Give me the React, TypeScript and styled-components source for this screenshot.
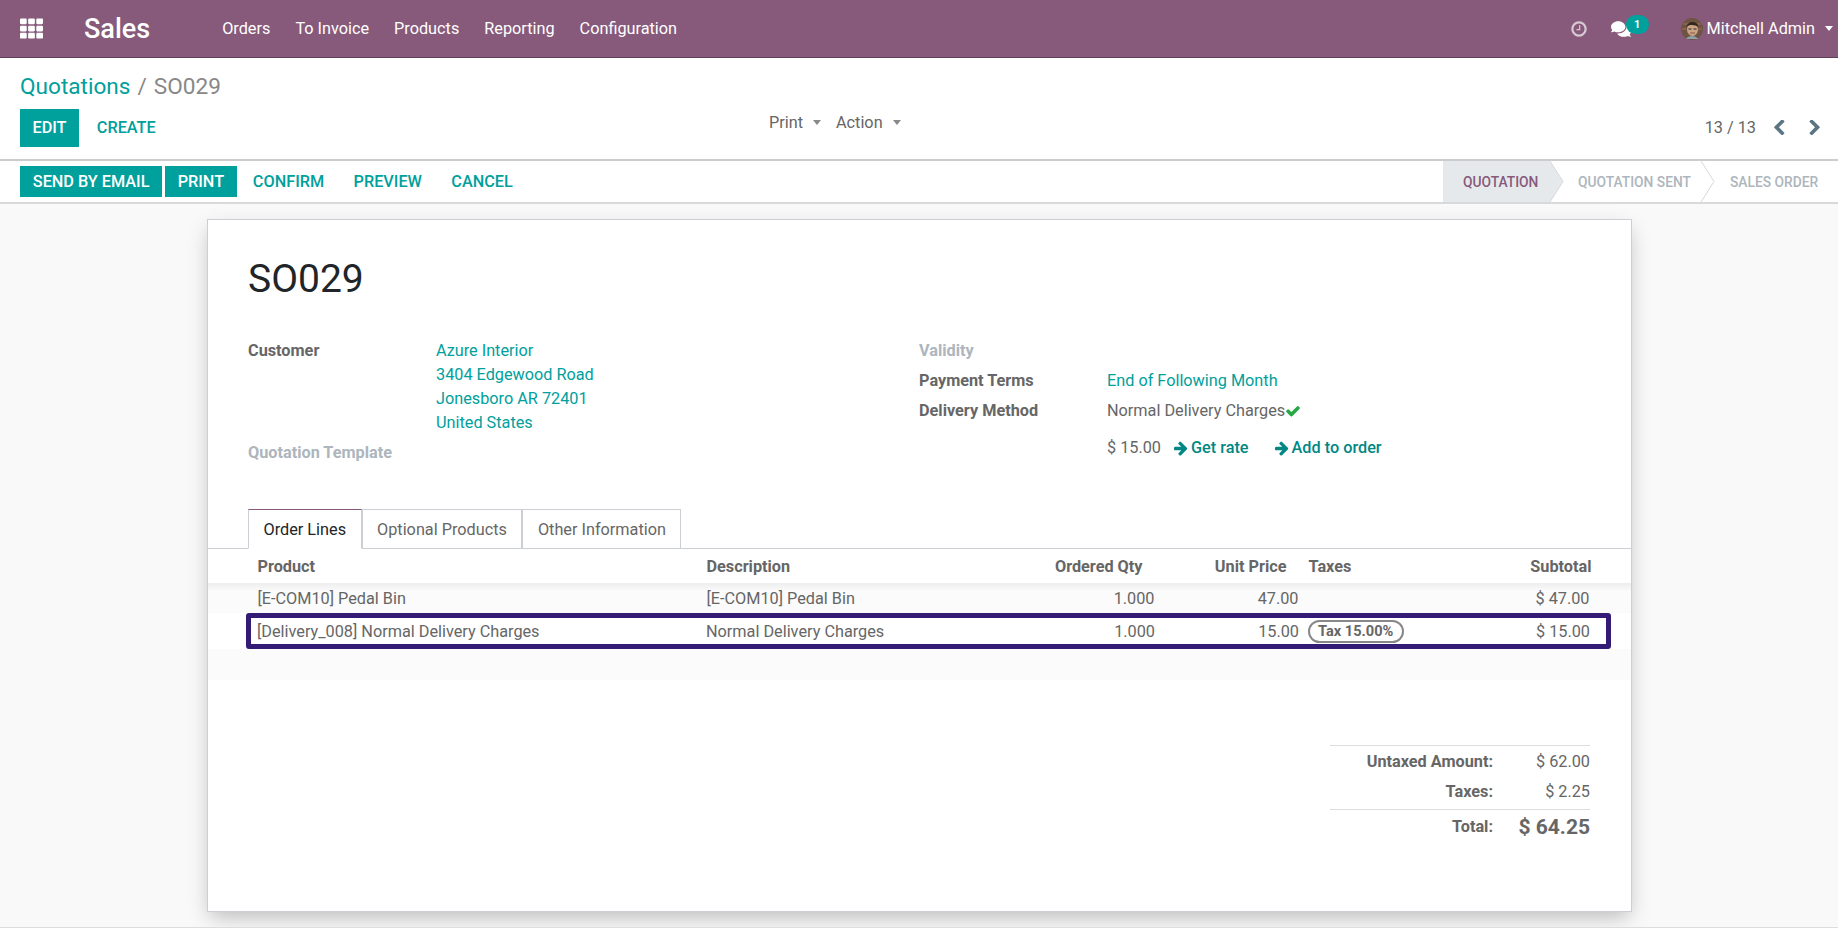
import React from "react";
import styled, { createGlobalStyle } from "styled-components";
import { FaComments, FaTh } from "react-icons/fa";

const GlobalStyle = createGlobalStyle`
  html, body {
    margin: 0;
    height: 100%;
    background: #fff;
  }
  body {
    font-family: Roboto, "Liberation Sans", sans-serif;
    font-size: 16.25px;
    color: #666;
    overflow: hidden;
  }
  * {
    box-sizing: border-box;
  }
`;

const Page = styled.div`
  width: 1838px;
  height: 949px;
  display: flex;
  flex-direction: column;
`;

const Navbar = styled.header`
  height: 58px;
  flex: none;
  display: flex;
  align-items: center;
  padding: 0 5px 0 20px;
  background: #875a7b;
  border-bottom: 1px solid #5f4058;
  color: #fff;
`;

const AppsIcon = styled(FaTh)`
  width: 23px;
  height: 23px;
  margin-right: 41px;
`;

const Brand = styled.span`
  font-size: 27px;
  font-weight: 500;
  margin-right: 72px;
`;

const Menu = styled.nav`
  display: flex;
  gap: 25px;
`;

const MenuItem = styled.span`
  color: #fff;
`;

const Systray = styled.div`
  margin-left: auto;
  display: flex;
  align-items: center;
`;

const ClockIcon = styled.svg`
  width: 18px;
  height: 18px;
  fill: #d6c9d3;
  margin-right: 23px;
`;

const ChatWrap = styled.div`
  width: 19px;
  height: 20px;
  position: relative;
  margin-right: 51px;
`;

const ChatIcon = styled(FaComments)`
  width: 20px;
  height: 18px;
  margin-top: 1px;
`;

const Badge = styled.span`
  position: absolute;
  left: 15px;
  top: -3.5px;
  width: 23px;
  height: 19px;
  border-radius: 10px;
  background: #00a09d;
  color: #fff;
  font-size: 11px;
  font-weight: 700;
  display: flex;
  align-items: center;
  justify-content: center;
`;

const Avatar = styled.svg`
  width: 22px;
  height: 22px;
  margin-right: 4px;
`;

const UserName = styled.span`
  margin-right: 10px;
`;

const Caret = styled.span<{ $color?: string }>`
  display: inline-block;
  width: 0;
  height: 0;
  border-left: 4px solid transparent;
  border-right: 4px solid transparent;
  border-top: 5px solid ${(p) => p.$color ?? "#fff"};
`;

const ControlPanel = styled.section`
  flex: none;
  height: 103px;
  background: #fff;
  border-bottom: 2px solid #ccc;
  padding: 16px 17px 0 20px;
`;

const Breadcrumb = styled.div`
  font-size: 22.6px;
  line-height: 26px;
  color: #888;
  margin-bottom: 9px;
`;

const Crumb = styled.a`
  color: #00a09d;
`;

const CrumbSep = styled.span`
  margin: 0 7px;
`;

const PanelRow = styled.div`
  display: grid;
  grid-template-columns: 749px 1fr auto;
  align-items: start;
`;

const Group = styled.div`
  display: flex;
  align-items: center;
`;

const Button = styled.button<{ $primary?: boolean }>`
  border: 0;
  border-radius: 0;
  background: ${(p) => (p.$primary ? "#00a09d" : "transparent")};
  color: ${(p) => (p.$primary ? "#fff" : "#00a09d")};
  font: 500 16.25px Roboto, sans-serif;
  text-transform: uppercase;
  padding: 0 12.8px;
  white-space: nowrap;
`;

const EditButton = styled(Button)`
  height: 38px;
  width: 59px;
  padding: 0 0 2px;
`;

const CreateButton = styled(Button)`
  height: 38px;
  margin-left: 5px;
  padding-bottom: 2px;
`;

const MiddleGroup = styled(Group)`
  padding-top: 1px;
`;

const DropToggle = styled.span`
  display: inline-flex;
  align-items: center;
  gap: 10px;
  margin-right: 15px;
  height: 24px;
  color: #666;
`;

const Pager = styled.div`
  display: flex;
  align-items: center;
  height: 36px;
  color: #666;
`;

const PagerText = styled.span`
  margin-right: 16px;
`;

const PagerArrow = styled.svg`
  width: 13px;
  height: 15px;
  fill: #5b7682;
  & + & {
    margin-left: 23px;
  }
`;

const StatusRow = styled.section`
  flex: none;
  height: 43px;
  display: flex;
  align-items: stretch;
  justify-content: space-between;
  background: #fff;
  border-bottom: 2px solid #d9d9d9;
  padding-left: 20px;
`;

const StatusButtons = styled.div`
  display: flex;
  align-items: center;
  gap: 2.6px;
`;

const StatusAction = styled(Button)`
  height: 31px;
  padding: 0 ${(p) => (p.$primary ? 12.8 : 13.4)}px;
`;

const Statusbar = styled.div`
  display: flex;
  align-items: stretch;
`;

const Stage = styled.div<{ $current?: boolean; $width: number; $pad: number }>`
  position: relative;
  width: ${(p) => p.$width}px;
  padding-left: ${(p) => p.$pad}px;
  display: flex;
  align-items: center;
  background: ${(p) => (p.$current ? "#e6e9ec" : "#fff")};
  color: ${(p) => (p.$current ? "#875a7b" : "#adb5bd")};
  font-size: 13.8px;
  font-weight: 500;
  text-transform: uppercase;
`;

const StageArrow = styled.svg`
  position: absolute;
  top: 0;
  left: 100%;
  width: 14px;
  height: 41px;
  z-index: 1;
`;

const Canvas = styled.main`
  flex: 1;
  min-height: 0;
  background: #f9f9f9;
  padding: 15px 206px 0 207px;
`;

const Sheet = styled.article`
  height: 693px;
  background: #fff;
  border: 1px solid #ccd0d5;
  box-shadow: 0 8px 20px -3px rgba(0, 0, 0, 0.25);
  padding-top: 37px;
  display: flex;
  flex-direction: column;
`;

const Title = styled.h1`
  margin: 0 0 0 40px;
  font-size: 39px;
  line-height: 44px;
  font-weight: 400;
  color: #212529;
`;

const FormGrid = styled.div`
  display: grid;
  grid-template-columns: 671px 1fr;
  padding-left: 40px;
  margin-top: 38px;
  height: 170px;
`;

const FieldColumn = styled.div`
  display: flex;
  flex-direction: column;
`;

const Field = styled.div`
  display: grid;
  grid-template-columns: 188px 1fr;
  line-height: 24px;
  margin-bottom: 6px;
`;

const Label = styled.label<{ $muted?: boolean }>`
  font-weight: 700;
  color: ${(p) => (p.$muted ? "#adb5bd" : "#666")};
`;

const LinkValue = styled.a`
  color: #00a09d;
`;

const Value = styled.span`
  color: #666;
  display: flex;
  align-items: center;
`;

const CheckIcon = styled.svg`
  width: 16px;
  height: 16px;
  fill: #28a745;
`;

const RateRow = styled.div`
  display: flex;
  align-items: center;
  line-height: 24px;
  margin: 7px 0 0 188px;
`;

const RateAction = styled.a`
  display: inline-flex;
  align-items: center;
  gap: 1px;
  color: #008784;
  font-weight: 500;
  margin-left: 13px;
  & + & {
    margin-left: 26px;
  }
`;

const ArrowIcon = styled.svg`
  width: 16px;
  height: 16px;
  fill: #008784;
`;

const Tabs = styled.div`
  display: flex;
  height: 40px;
  padding-left: 40px;
  border-bottom: 1px solid #ccd0d5;
`;

const Tab = styled.div<{ $active?: boolean }>`
  height: 40px;
  padding: 0 14.5px;
  display: flex;
  align-items: center;
  background: #fff;
  color: ${(p) => (p.$active ? "#212529" : "#666")};
  border: 1px solid #ccd0d5;
  border-top: 1px solid ${(p) => (p.$active ? "#875a7b" : "#ccd0d5")};
  border-bottom: 1px solid ${(p) => (p.$active ? "#fff" : "#ccd0d5")};
`;

const colTemplate = "449px 272px 176px 144px 190px 101px";
const boxedTemplate = "449px 273px 176px 144px 190px 101px";

const HeadRow = styled.div`
  display: grid;
  grid-template-columns: ${colTemplate};
  height: 34px;
  align-items: center;
  padding-left: 49.5px;
  font-weight: 700;
`;

const LineRow = styled.div`
  display: grid;
  grid-template-columns: ${colTemplate};
  align-items: center;
  height: 30px;
  padding-left: 49.5px;
  background: linear-gradient(#ededed, #fbfbfb 8px, #fbfbfb);
`;

const BoxedRow = styled.div`
  margin: 0 20px 0 38px;
  height: 36px;
  border: 5.5px solid #341c76;
  border-radius: 3px;
  background: #fff;
  display: grid;
  grid-template-columns: ${boxedTemplate};
  align-items: center;
  padding-left: 6px;
`;

const Spacer = styled.div`
  height: 31px;
  background: #fbfbfb;
`;

const Cell = styled.div<{ $right?: boolean }>`
  text-align: ${(p) => (p.$right ? "right" : "left")};
  white-space: nowrap;
`;

const HeadCell = styled(Cell)<{ $shift?: number }>`
  margin-right: ${(p) => p.$shift ?? 0}px;
`;

const TaxCell = styled(Cell)`
  padding-left: 10px;
`;

const TaxPill = styled.span`
  display: inline-block;
  height: 23px;
  line-height: 19px;
  margin-left: -1px;
  border: 2px solid #888;
  border-radius: 12px;
  padding: 0 8.5px 0 8px;
  font-size: 14.6px;
  font-weight: 700;
`;

const Totals = styled.div`
  align-self: flex-end;
  width: 260px;
  margin: 65px 41px 0 0;
  border-top: 1px solid #ddd;
`;

const TotalRow = styled.div<{ $grand?: boolean }>`
  display: grid;
  grid-template-columns: 163px 1fr;
  align-items: center;
  height: ${(p) => (p.$grand ? 34 : 30)}px;
  margin-top: ${(p) => (p.$grand ? 3 : 0)}px;
  border-top: ${(p) => (p.$grand ? "1px solid #ddd" : "0")};
  text-align: right;
`;

const TotalLabel = styled.span`
  font-weight: 700;
`;

const GrandValue = styled.span`
  font-size: 21px;
  font-weight: 700;
`;

const FooterLine = styled.div`
  flex: none;
  height: 22px;
  background: #fff;
  border-top: 1px solid #ddd;
`;

const menuItems = ["Orders", "To Invoice", "Products", "Reporting", "Configuration"];
const address = ["Azure Interior", "3404 Edgewood Road", "Jonesboro AR 72401", "United States"];

const arrowPath =
  "M1472 960q0 54-37 91l-651 651q-39 37-91 37-51 0-90-37l-75-75q-38-38-38-91t38-91l293-293h-704q-52 0-84.5-37.5t-32.5-90.5v-128q0-53 32.5-90.5t84.5-37.5h704l-293-294q-38-36-38-90t38-90l75-75q38-38 90-38 53 0 91 38l651 651q37 35 37 90z";

export default function App() {
  return (
    <Page>
      <GlobalStyle />
      <Navbar>
        <AppsIcon />
        <Brand>Sales</Brand>
        <Menu>
          {menuItems.map((m) => (
            <MenuItem key={m}>{m}</MenuItem>
          ))}
        </Menu>
        <Systray>
          <ClockIcon viewBox="0 0 1792 1792">
            <path d="M1024 544v448q0 14-9 23t-23 9h-320q-14 0-23-9t-9-23v-64q0-14 9-23t23-9h224v-352q0-14 9-23t23-9h64q14 0 23 9t9 23zm416 352q0-148-73-273t-198-198-273-73-273 73-198 198-73 273 73 273 198 198 273 73 273-73 198-198 73-273zm224 0q0 209-103 385.5t-279.5 279.5-385.5 103-385.5-103-279.5-279.5-103-385.5 103-385.5 279.5-279.5 385.5-103 385.5 103 279.5 279.5 103 385.5z" />
          </ClockIcon>
          <ChatWrap>
            <ChatIcon />
            <Badge>1</Badge>
          </ChatWrap>
          <Avatar viewBox="0 0 22 22">
            <circle cx="11" cy="11" r="11" fill="#6f5443" />
            <path d="M2 6h18M1 11h4M17 11h4" stroke="#8d6a52" strokeWidth="1.5" />
            <ellipse cx="11.5" cy="11.5" rx="5.5" ry="6.5" fill="#c9a488" />
            <path d="M5.5 9c1-6 11-7 12 0-3-2-9-3-12 0z" fill="#33261f" />
            <path d="M5 21c2-4 10-4 12 0z" fill="#8ea0a8" />
            <path d="M7.5 11h3M12.5 11h3" stroke="#33261f" strokeWidth="1.2" />
            <path d="M9 15h5" stroke="#8a5a48" strokeWidth="1" />
          </Avatar>
          <UserName>Mitchell Admin</UserName>
          <Caret />
        </Systray>
      </Navbar>

      <ControlPanel>
        <Breadcrumb>
          <Crumb>Quotations</Crumb>
          <CrumbSep>/</CrumbSep>SO029
        </Breadcrumb>
        <PanelRow>
          <Group>
            <EditButton $primary>Edit</EditButton>
            <CreateButton>Create</CreateButton>
          </Group>
          <MiddleGroup>
            <DropToggle>
              Print <Caret $color="#888" />
            </DropToggle>
            <DropToggle>
              Action <Caret $color="#888" />
            </DropToggle>
          </MiddleGroup>
          <Pager>
            <PagerText>13 / 13</PagerText>
            <PagerArrow viewBox="200 100 1300 1500">
              <path d="M1427 301l-531 531 531 531q19 19 19 45t-19 45l-166 166q-19 19-45 19t-45-19l-742-742q-19-19-19-45t19-45l742-742q19-19 45-19t45 19l166 166q19 19 19 45t-19 45z" />
            </PagerArrow>
            <PagerArrow viewBox="200 100 1300 1500">
              <path d="M1363 877l-742 742q-19 19-45 19t-45-19l-166-166q-19-19-19-45t19-45l531-531-531-531q-19-19-19-45t19-45l166-166q19-19 45-19t45 19l742 742q19 19 19 45t-19 45z" />
            </PagerArrow>
          </Pager>
        </PanelRow>
      </ControlPanel>

      <StatusRow>
        <StatusButtons>
          <StatusAction $primary>Send by email</StatusAction>
          <StatusAction $primary>Print</StatusAction>
          <StatusAction>Confirm</StatusAction>
          <StatusAction>Preview</StatusAction>
          <StatusAction>Cancel</StatusAction>
        </StatusButtons>
        <Statusbar>
          <Stage $current $width={107} $pad={20}>
            Quotation
            <StageArrow viewBox="0 0 14 41" preserveAspectRatio="none">
              <path d="M0 0 L13 20.5 L0 41 Z" fill="#e6e9ec" />
              <path d="M0 0 L13 20.5 L0 41" fill="none" stroke="#d5d9dd" />
            </StageArrow>
          </Stage>
          <Stage $width={151} $pad={28}>
            Quotation sent
            <StageArrow viewBox="0 0 14 41" preserveAspectRatio="none">
              <path d="M0 0 L13 20.5 L0 41" fill="#fff" stroke="#d5d9dd" />
            </StageArrow>
          </Stage>
          <Stage $width={137} $pad={29}>
            Sales order
          </Stage>
        </Statusbar>
      </StatusRow>

      <Canvas>
        <Sheet>
          <Title>SO029</Title>
          <FormGrid>
            <FieldColumn>
              <Field>
                <Label>Customer</Label>
                <div>
                  {address.map((line) => (
                    <div key={line}>
                      <LinkValue>{line}</LinkValue>
                    </div>
                  ))}
                </div>
              </Field>
              <Field>
                <Label $muted>Quotation Template</Label>
              </Field>
            </FieldColumn>
            <FieldColumn>
              <Field>
                <Label $muted>Validity</Label>
              </Field>
              <Field>
                <Label>Payment Terms</Label>
                <LinkValue>End of Following Month</LinkValue>
              </Field>
              <Field>
                <Label>Delivery Method</Label>
                <Value>
                  Normal Delivery Charges
                  <CheckIcon viewBox="0 0 1792 1792">
                    <path d="M1671 566q0 40-28 68l-724 724-136 136q-28 28-68 28t-68-28l-136-136-362-362q-28-28-28-68t28-68l136-136q28-28 68-28t68 28l294 295 656-657q28-28 68-28t68 28l136 136q28 28 28 68z" />
                  </CheckIcon>
                </Value>
              </Field>
              <RateRow>
                <span>$ 15.00</span>
                <RateAction>
                  <ArrowIcon viewBox="0 0 1792 1792">
                    <path d={arrowPath} />
                  </ArrowIcon>
                  Get rate
                </RateAction>
                <RateAction>
                  <ArrowIcon viewBox="0 0 1792 1792">
                    <path d={arrowPath} />
                  </ArrowIcon>
                  Add to order
                </RateAction>
              </RateRow>
            </FieldColumn>
          </FormGrid>
          <Tabs>
            <Tab $active>Order Lines</Tab>
            <Tab>Optional Products</Tab>
            <Tab>Other Information</Tab>
          </Tabs>
          <HeadRow>
            <Cell>Product</Cell>
            <Cell>Description</Cell>
            <HeadCell $right $shift={12}>
              Ordered Qty
            </HeadCell>
            <HeadCell $right $shift={12}>
              Unit Price
            </HeadCell>
            <TaxCell>Taxes</TaxCell>
            <HeadCell $right $shift={-2}>
              Subtotal
            </HeadCell>
          </HeadRow>
          <LineRow>
            <Cell>[E-COM10] Pedal Bin</Cell>
            <Cell>[E-COM10] Pedal Bin</Cell>
            <Cell $right>1.000</Cell>
            <Cell $right>47.00</Cell>
            <TaxCell />
            <Cell $right>$ 47.00</Cell>
          </LineRow>
          <BoxedRow>
            <Cell>[Delivery_008] Normal Delivery Charges</Cell>
            <Cell>Normal Delivery Charges</Cell>
            <Cell $right>1.000</Cell>
            <Cell $right>15.00</Cell>
            <TaxCell>
              <TaxPill>Tax 15.00%</TaxPill>
            </TaxCell>
            <Cell $right>$ 15.00</Cell>
          </BoxedRow>
          <Spacer />
          <Totals>
            <TotalRow>
              <TotalLabel>Untaxed Amount:</TotalLabel>
              <span>$ 62.00</span>
            </TotalRow>
            <TotalRow>
              <TotalLabel>Taxes:</TotalLabel>
              <span>$ 2.25</span>
            </TotalRow>
            <TotalRow $grand>
              <TotalLabel>Total:</TotalLabel>
              <GrandValue>$ 64.25</GrandValue>
            </TotalRow>
          </Totals>
        </Sheet>
      </Canvas>
      <FooterLine />
    </Page>
  );
}
